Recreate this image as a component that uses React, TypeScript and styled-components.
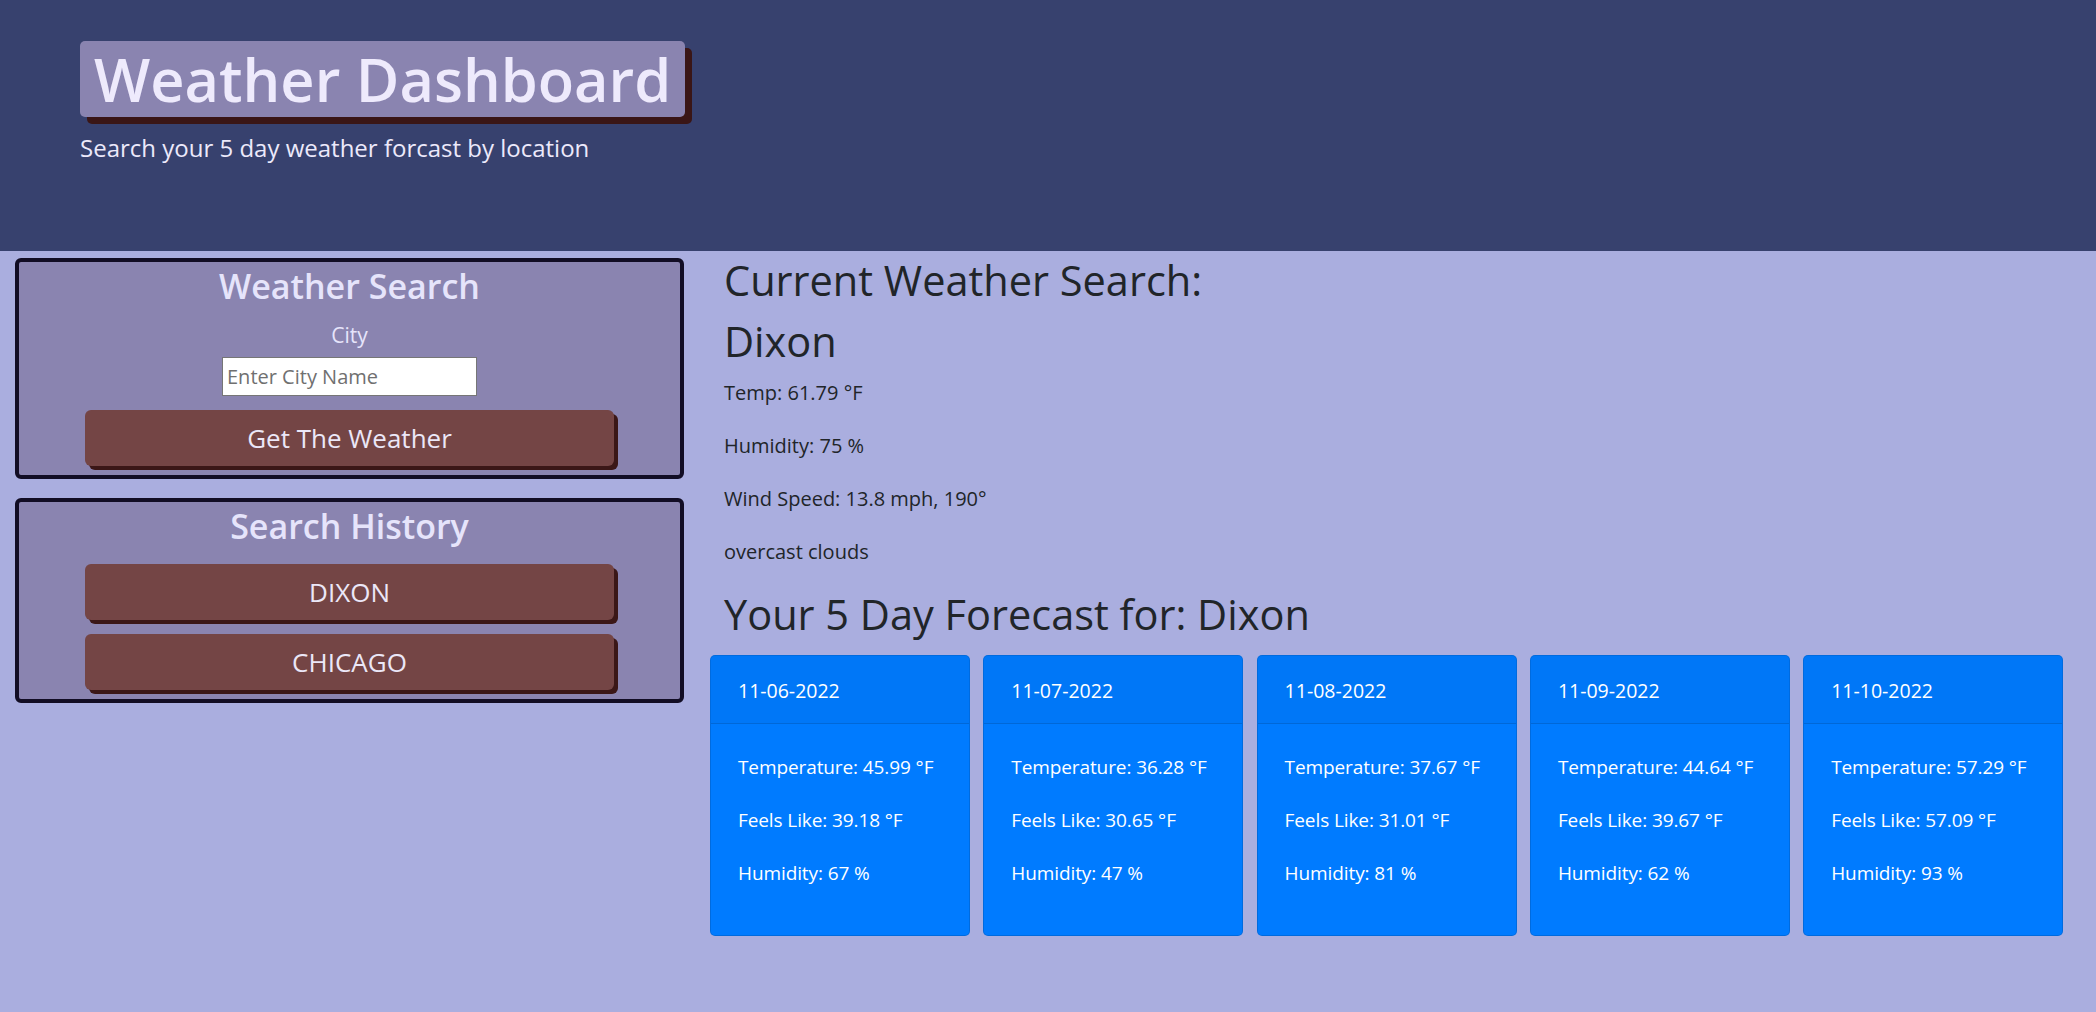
import React from 'react'
import styled, { createGlobalStyle } from 'styled-components'

const GlobalStyle = createGlobalStyle`
  html, body {
    margin: 0;
    padding: 0;
  }
  body {
    background: #aaaedf;
    font-family: "Open Sans", "Noto Sans", sans-serif;
    color: #212529;
  }
  * {
    box-sizing: border-box;
  }
`;

const Jumbotron = styled.header`
  background: #37416e;
  height: 251px;
  padding: 41px 80px 0;
`;

const TitleBadge = styled.h1`
  display: inline-block;
  margin: 0;
  padding: 0 14px;
  height: 76px;
  line-height: 76px;
  font-size: 59.5px;
  font-weight: 600;
  color: #eeeafc;
  background: #8a84b0;
  border-radius: 5px;
  box-shadow: 7px 7px 0 #3a1616;
  white-space: nowrap;
`;

const Tagline = styled.p`
  margin: 16px 0 0;
  font-size: 24px;
  line-height: 30px;
  color: #ece9fb;
`;

const Main = styled.main`
  display: flex;
  align-items: flex-start;
`;

const Sidebar = styled.aside`
  width: 669px;
  margin: 7px 0 0 15px;
  display: flex;
  flex-direction: column;
  gap: 19px;
`;

const Panel = styled.section`
  background: #8a84b0;
  border: 4px solid #120d24;
  border-radius: 6px;
  text-align: center;
  padding: 2px 0 5px;
  display: flex;
  flex-direction: column;
  align-items: center;
`;

const PanelTitle = styled.h3`
  margin: 0;
  font-size: 34px;
  line-height: 44px;
  font-weight: 600;
  color: #e6e4fb;
`;

const Label = styled.label`
  margin-top: 13px;
  font-size: 21px;
  line-height: 28px;
  color: #e6e4fb;
`;

const CityInput = styled.input`
  margin-top: 8px;
  width: 255px;
  height: 39px;
  border: 1px solid #767676;
  background: #fff;
  padding: 0 4px;
  font-family: inherit;
  font-size: 20px;
  outline: none;
  &::placeholder {
    color: #707070;
  }
`;

const ActionButton = styled.button<{ $top?: number }>`
  width: 529px;
  height: 56px;
  margin-top: ${p => p.$top ?? 14}px;
  margin-bottom: 4px;
  border: none;
  border-radius: 6px;
  background: #744545;
  box-shadow: 4px 4px 0 #3b1717;
  color: #ebe7f7;
  font-family: inherit;
  font-size: 26px;
  cursor: pointer;
`;

const Content = styled.div`
  margin-left: 26px;
  width: 1353px;
`;

const Current = styled.div`
  padding: 4px 0 0 14px;
`;

const Heading = styled.h2`
  margin: 0 0 10px;
  font-size: 41.5px;
  line-height: 51px;
  font-weight: 500;
`;

const Stat = styled.p`
  margin: 0 0 21px;
  font-size: 20px;
  line-height: 32px;
`;

const CardRow = styled.div`
  display: grid;
  grid-template-columns: repeat(5, 260px);
  column-gap: 13.3px;
  margin-top: 15px;
`;

const Card = styled.div`
  background: #007bff;
  color: #fff;
  border: 1px solid rgba(0, 0, 0, 0.125);
  border-radius: 5px;
  overflow: hidden;
  height: 281px;
`;

const CardHeader = styled.div`
  padding: 19px 27px 16px;
  font-size: 19.5px;
  line-height: 32px;
  background: rgba(0, 0, 0, 0.03);
  border-bottom: 1px solid rgba(0, 0, 0, 0.125);
`;

const CardBody = styled.div`
  padding: 27px 27px;
`;

const CardLine = styled.p`
  margin: 0 0 21px;
  font-size: 19px;
  line-height: 32px;
  letter-spacing: -0.1px;
  white-space: nowrap;
`;

const forecast = [
  { date: '11-06-2022', temp: '45.99', feels: '39.18', humidity: 67 },
  { date: '11-07-2022', temp: '36.28', feels: '30.65', humidity: 47 },
  { date: '11-08-2022', temp: '37.67', feels: '31.01', humidity: 81 },
  { date: '11-09-2022', temp: '44.64', feels: '39.67', humidity: 62 },
  { date: '11-10-2022', temp: '57.29', feels: '57.09', humidity: 93 },
];

const history = ['DIXON', 'CHICAGO'];

const App = () => {
  return (
    <>
      <GlobalStyle />
      <Jumbotron>
        <TitleBadge>Weather Dashboard</TitleBadge>
        <Tagline>Search your 5 day weather forcast by location</Tagline>
      </Jumbotron>
      <Main>
        <Sidebar>
          <Panel>
            <PanelTitle>Weather Search</PanelTitle>
            <Label htmlFor="city">City</Label>
            <CityInput id="city" placeholder="Enter City Name" />
            <ActionButton>Get The Weather</ActionButton>
          </Panel>
          <Panel>
            <PanelTitle>Search History</PanelTitle>
            {history.map((city, i) => (
              <ActionButton key={city} $top={i === 0 ? 16 : 10}>{city}</ActionButton>
            ))}
          </Panel>
        </Sidebar>
        <Content>
          <Current>
            <Heading>Current Weather Search:</Heading>
            <Heading>Dixon</Heading>
            <Stat>Temp: 61.79 °F</Stat>
            <Stat>Humidity: 75 %</Stat>
            <Stat>Wind Speed: 13.8 mph, 190°</Stat>
            <Stat>overcast clouds</Stat>
            <Heading>Your 5 Day Forecast for: Dixon</Heading>
          </Current>
          <CardRow>
            {forecast.map(day => (
              <Card key={day.date}>
                <CardHeader>{day.date}</CardHeader>
                <CardBody>
                  <CardLine>Temperature: {day.temp} °F</CardLine>
                  <CardLine>Feels Like: {day.feels} °F</CardLine>
                  <CardLine>Humidity: {day.humidity} %</CardLine>
                </CardBody>
              </Card>
            ))}
          </CardRow>
        </Content>
      </Main>
    </>
  )
}

export default App
